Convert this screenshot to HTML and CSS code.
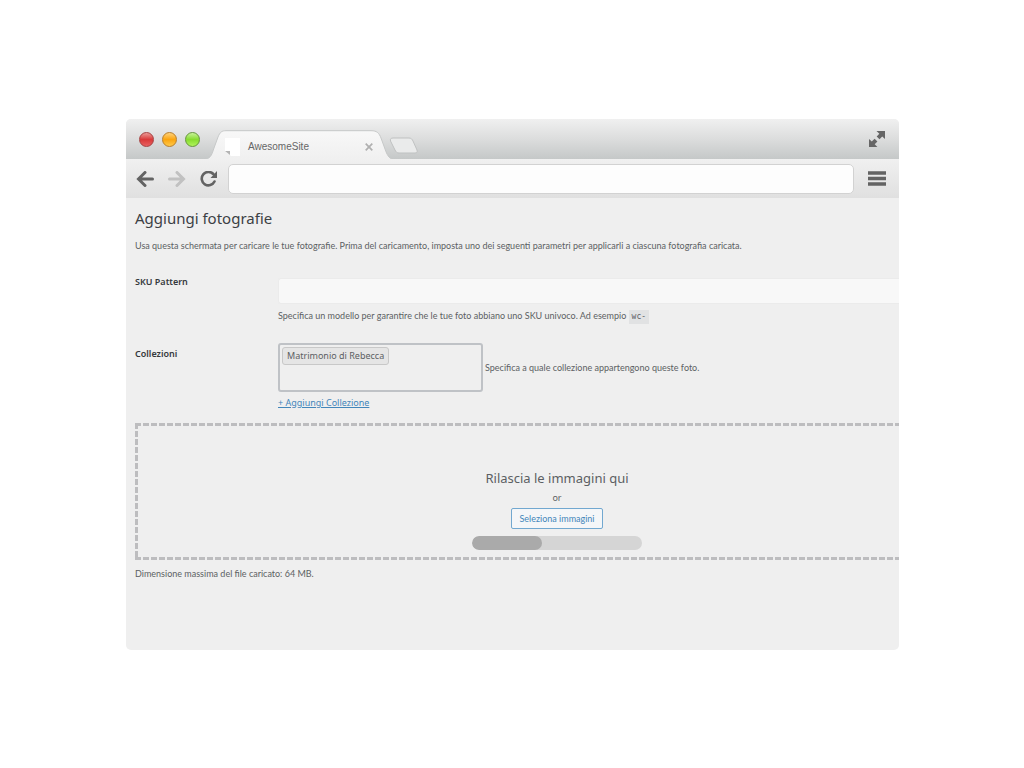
FILE: index.html
```html
<!DOCTYPE html>
<html lang="it">
<head>
<meta charset="utf-8">
<title>Aggiungi fotografie</title>
<link rel="stylesheet" href="styles.css">
</head>
<body>
<div class="window">
  <header class="tabbar">
    <div class="lights">
      <span class="light light-red"></span>
      <span class="light light-amber"></span>
      <span class="light light-green"></span>
    </div>
    <div class="tab">
      <svg class="tab-shape" viewBox="0 0 186 29" preserveAspectRatio="none" aria-hidden="true">
        <defs><linearGradient id="tabfill" x1="0" y1="0" x2="0" y2="1"><stop offset="0" stop-color="#f8f8f8"/><stop offset="1" stop-color="#f0f0f0"/></linearGradient></defs>
        <path d="M0 29C5 28 6 24 8 18L12 7C14 2 16 .7 20 .7H165C171 .7 173 3 175 8L179 19C181 25 183 28 186 29Z" fill="url(#tabfill)"/>
        <path d="M0 29C5 28 6 24 8 18L12 7C14 2 16 .7 20 .7H165C171 .7 173 3 175 8L179 19C181 25 183 28 186 29" fill="none" stroke="#c6c8c8" stroke-width="1"/>
      </svg>
      <svg class="favicon" viewBox="0 0 15 18" aria-hidden="true"><path d="M0 0H15V18H6L0 13Z" fill="#fff"/><path d="M0 13H5L5 17Z" fill="#b4b4b4"/></svg>
      <span class="tab-title">AwesomeSite</span>
      <button class="tab-close" aria-label="Chiudi scheda"><svg viewBox="0 0 8 8"><path d="M.7 .7L7.3 7.3M7.3 .7L.7 7.3" stroke="#b0b0b0" stroke-width="1.7"/></svg></button>
    </div>
    <button class="new-tab" aria-label="Nuova scheda"><svg viewBox="0 0 30 17"><path d="M4 1H20C22 1 23 2 24 4L28 13C28.600 15 28 16 26 16H10C8 16 7 15 6 13L1.500 4C1 2 2 1 4 1Z" fill="#eaebeb" stroke="#bfc1c1"/></svg></button>
    <button class="expand" aria-label="Schermo intero"><svg viewBox="0 0 18 18"><path d="M8.500 1H17V9L14.200 6.500L11.500 9.200L8.700 6.500L11.300 3.800ZM1 9L3.800 11.400L6.600 8.700L9.400 11.400L6.700 14.200L9.400 17H1Z" fill="#666"/></svg></button>
  </header>
  <nav class="toolbar">
    <button class="nav-button" aria-label="Indietro"><svg viewBox="0 0 18 16"><path d="M16.500 8H3M9 1.500L2.500 8L9 14.500" fill="none" stroke="#636363" stroke-width="3" stroke-linecap="round"/></svg></button>
    <button class="nav-button" aria-label="Avanti"><svg viewBox="0 0 18 16"><path d="M1.500 8H15M9 1.500L15.500 8L9 14.500" fill="none" stroke="#c1c1c1" stroke-width="3" stroke-linecap="round"/></svg></button>
    <button class="nav-button" aria-label="Ricarica"><svg viewBox="0 0 18 16"><path d="M13.300 3A6.700 6.700 0 1 0 14.500 10.500" fill="none" stroke="#636363" stroke-width="2.600" stroke-linecap="round"/><path d="M17 0V7H10.500Z" fill="#636363"/></svg></button>
    <input class="address" type="text" aria-label="Indirizzo">
    <button class="menu" aria-label="Menu"><svg viewBox="0 0 18 15"><path d="M0 2H18M0 7.500H18M0 13H18" stroke="#636363" stroke-width="3.400"/></svg></button>
  </nav>
  <main class="page">
    <h1 class="title">Aggiungi fotografie</h1>
    <p class="intro">Usa questa schermata per caricare le tue fotografie. Prima del caricamento, imposta uno dei seguenti parametri per applicarli a ciascuna fotografia caricata.</p>
    <div class="row row-sku">
      <label class="label" for="sku">SKU Pattern</label>
      <div class="field">
        <input class="sku" id="sku" type="text">
        <p class="hint">Specifica un modello per garantire che le tue foto abbiano uno SKU univoco. Ad esempio <code class="code">wc-</code></p>
      </div>
    </div>
    <div class="row row-collections">
      <span class="label" id="collections-label">Collezioni</span>
      <div class="field">
        <div class="picker">
          <div class="collections" role="group" aria-labelledby="collections-label"><span class="chip">Matrimonio di Rebecca</span></div>
          <span class="picker-hint">Specifica a quale collezione appartengono queste foto.</span>
        </div>
        <a class="add" href="#">+ Aggiungi Collezione</a>
      </div>
    </div>
    <section class="dropzone">
      <h2 class="drop-title">Rilascia le immagini qui</h2>
      <span class="or">or</span>
      <button class="select">Seleziona immagini</button>
      <div class="progress" role="progressbar" aria-label="Caricamento" aria-valuenow="41"><div class="progress-fill" style="width:41%"></div></div>
    </section>
    <p class="limit">Dimensione massima del file caricato: 64 MB.</p>
  </main>
</div>
</body>
</html>
```

FILE: styles.css
```css
* { box-sizing: border-box; }
body { margin: 0; padding: 119px 125px 24px 126px; background: #fff; color: #5c5f63; font: 9px/14px "Noto Sans", sans-serif; }
h1, h2, p { margin: 0; font-weight: 400; }
button { padding: 0; border: 0; background: none; font: inherit; cursor: pointer; }
svg { display: block; width: 100%; height: 100%; }
.window { display: flex; flex-direction: column; min-height: 531px; border-radius: 5px; overflow: hidden; background: #efefef; }
.tabbar { display: flex; align-items: flex-end; height: 40px; background: linear-gradient(#f0f0f0, #dcdddd 50%, #c5c8c8); }
.lights { display: flex; gap: 8px; padding: 0 6px 12px 13px; }
.light { width: 15px; height: 15px; border: 1px solid; border-radius: 50%; }
.light-red { border-color: #a64040; background: linear-gradient(#eb9a96, #d93a3a 50%, #e86060); }
.light-amber { border-color: #b87d28; background: linear-gradient(#ffd27a, #fba50f 50%, #ffc94a); }
.light-green { border-color: #64953a; background: linear-gradient(#c8f39a, #87dc2f 50%, #b0f45c); }
.tab { position: relative; display: flex; align-items: center; width: 186px; height: 29px; padding: 4px 19px 0 19px; }
.tab-shape { position: absolute; inset: 0; }
.favicon { position: relative; width: 15px; height: 18px; }
.tab-title { position: relative; flex: 1; padding-left: 8px; color: #666; font: 10px/14px "Liberation Sans", Arial, sans-serif; }
.tab-close { position: relative; width: 8px; height: 8px; }
.new-tab { width: 30px; height: 17px; margin: 0 0 5px -3px; }
.expand { width: 18px; height: 18px; margin: 0 13px 11px auto; }
.toolbar { display: flex; align-items: center; height: 39px; padding: 0 13px 0 10px; background: linear-gradient(#f0f0f0, #e0e0e0); }
.nav-button { width: 18px; height: 16px; margin-right: 14px; }
.address { flex: 1; min-width: 0; height: 30px; margin: 0 14px 0 -4px; padding: 0 8px; border: 1px solid #d2d2d2; border-radius: 5px; background: #fdfdfd; }
.menu { width: 18px; height: 15px; }
.page { padding: 10px 0 0 9px; }
.title { color: #3c4044; font-size: 15px; line-height: 20px; }
.intro, .hint, .picker-hint, .select, .limit { font-family: Lato, "Noto Sans", sans-serif; }
.intro { margin-top: 11px; }
.row { display: grid; grid-template-columns: 143px minmax(0, 1fr); }
.row-sku { margin: 25px 0 19px; }
.label { height: 14px; color: #35393d; font-weight: 600; }
.row-sku .label { margin-top: -3px; }
.row-collections .label { margin-top: 4px; }
.sku { display: block; width: 100%; height: 26px; border: 1px solid #ebebeb; border-right: 0; border-radius: 3px 0 0 3px; background: #f8f8f8; }
.hint { margin-top: 5px; }
.code { display: inline-block; padding: 0 3px; background: #e1e2e3; font: 8px/14px "DejaVu Sans Mono", monospace; }
.picker { display: flex; align-items: center; gap: 2px; }
.collections { width: 205px; height: 49px; padding: 2px; border: 2px solid #bfc2c6; border-radius: 3px; }
.chip { display: block; width: max-content; padding: 0 4px; border: 1px solid #c8c8c8; border-radius: 3px; background: #e5e5e5; line-height: 16px; }
.add { display: block; width: max-content; margin-top: 4px; color: #4386ba; }
.dropzone { display: flex; flex-direction: column; align-items: center; height: 137px; margin-top: 13px; padding: 46px 0 0 80px; background: repeating-linear-gradient(90deg, #bdbdbf 0 6px, transparent 6px 8px) top / 100% 3px no-repeat, repeating-linear-gradient(90deg, #bdbdbf 0 6px, transparent 6px 8px) bottom / 100% 3px no-repeat, repeating-linear-gradient(#bdbdbf 0 6px, transparent 6px 8px) left / 3px 100% no-repeat; }
.drop-title { font-size: 13px; line-height: 18px; }
.or { margin: 4px 0 3px; }
.select { height: 21px; padding: 0 7px; border: 1px solid #72a8d0; border-radius: 2px; background: #f4f6f8; color: #4386ba; }
.progress { width: 170px; height: 14px; margin-top: 7px; border-radius: 7px; overflow: hidden; background: #d5d5d5; }
.progress-fill { height: 100%; border-radius: 7px; background: #aaa; }
.limit { margin-top: 7px; }
```
